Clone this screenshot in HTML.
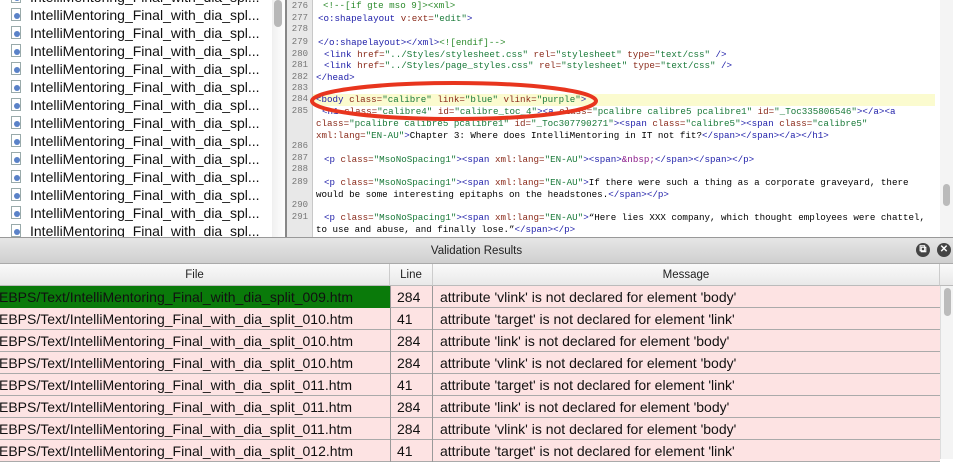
<!DOCTYPE html>
<html><head><meta charset="utf-8">
<style>
*{margin:0;padding:0;box-sizing:border-box}
body{width:953px;height:459px;overflow:hidden;background:#fff;font-family:"Liberation Sans",sans-serif;position:relative}
.left{position:absolute;left:0;top:0;width:272px;height:237px;background:#fff;overflow:hidden}
.li{position:absolute;left:0;height:18px;font-size:14px;color:#111;white-space:nowrap}
.li .ic{position:absolute;left:11px;top:2px;width:10px;height:13px;border:1px solid #9aa;background:#fff}
.li .ic:after{content:"";position:absolute;left:2px;top:4px;width:6px;height:6px;border-radius:50%;background:#5a82c8}
.li span{position:absolute;left:30px;top:0;line-height:18px}
.lsb{position:absolute;left:272px;top:0;width:13px;height:237px;background:linear-gradient(90deg,#f0f0f0,#fff)}
.lsb div{position:absolute;left:2px;top:0;width:8px;height:27px;border-radius:4px;background:#b8b8b8}
.div{position:absolute;left:285px;top:0;width:2px;height:237px;background:#888}
.gut{position:absolute;left:287px;top:0;width:26px;height:237px;background:#e8e8e8;border-right:1px solid #c8c8c8}
.code{position:absolute;left:313px;top:0;width:627px;height:237px;background:#fff;overflow:hidden}
.hl{position:absolute;left:0;top:94px;width:622px;height:12px;background:#fbfbcf}
.ln{position:absolute;left:288px;width:20px;text-align:right;font-family:"Liberation Mono",monospace;font-size:9px;color:#777}
.cl{position:absolute;left:317px;white-space:nowrap;font-family:"Liberation Mono",monospace;font-size:9.2px;line-height:12px}
.t{color:#1c1ca8}.a{color:#8a2a1a}.v{color:#1a7a3a}.c{color:#2b8a2b}.e{color:#8a1a8a}
.rsb{position:absolute;left:940px;top:0;width:13px;height:237px;background:#f4f4f4}
.rsb div{position:absolute;left:3px;top:184px;width:7px;height:22px;border-radius:4px;background:#bbb}
.vh{position:absolute;left:0;top:237px;width:953px;height:27px;background:linear-gradient(#e6e6e6,#cfcfcf);border-top:1px solid #999;border-bottom:1px solid #aaa;text-align:center;font-size:11.5px;line-height:27px;color:#222}
.btn{position:absolute;top:243px;width:14px;height:14px;border-radius:50%;background:#444;color:#fff;font-size:10px;line-height:14px;text-align:center;font-weight:bold}
.th{position:absolute;top:264px;height:22px;background:linear-gradient(#fafafa,#e9e9e9);border-bottom:1px solid #bbb;border-right:1px solid #ccc;font-size:11.5px;line-height:22px;text-align:center;color:#222}
.row{position:absolute;left:0;width:940px;height:22px;background:#fde3e3;border-bottom:1px solid #aaa;font-size:14px;line-height:22px;color:#111}
.row div{position:absolute;top:0;height:22px;white-space:nowrap}
.f{left:0;width:390px;text-indent:-1px}
.l{left:390px;width:43px;border-left:1px solid #999;border-right:1px solid #999;padding-left:6px}
.m{left:433px;width:507px;padding-left:7px}
.tsb{position:absolute;left:940px;top:286px;width:13px;height:173px;background:#f4f4f4;border-left:1px solid #ddd}
.tsb div{position:absolute;left:3px;top:2px;width:7px;height:28px;border-radius:4px;background:#bbb}
</style></head><body>
<div class="left">
<div class="li" style="top:-12px"><i class="ic"></i><span>IntelliMentoring_Final_with_dia_spl...</span></div>
<div class="li" style="top:6px"><i class="ic"></i><span>IntelliMentoring_Final_with_dia_spl...</span></div>
<div class="li" style="top:24px"><i class="ic"></i><span>IntelliMentoring_Final_with_dia_spl...</span></div>
<div class="li" style="top:42px"><i class="ic"></i><span>IntelliMentoring_Final_with_dia_spl...</span></div>
<div class="li" style="top:60px"><i class="ic"></i><span>IntelliMentoring_Final_with_dia_spl...</span></div>
<div class="li" style="top:78px"><i class="ic"></i><span>IntelliMentoring_Final_with_dia_spl...</span></div>
<div class="li" style="top:96px"><i class="ic"></i><span>IntelliMentoring_Final_with_dia_spl...</span></div>
<div class="li" style="top:114px"><i class="ic"></i><span>IntelliMentoring_Final_with_dia_spl...</span></div>
<div class="li" style="top:132px"><i class="ic"></i><span>IntelliMentoring_Final_with_dia_spl...</span></div>
<div class="li" style="top:150px"><i class="ic"></i><span>IntelliMentoring_Final_with_dia_spl...</span></div>
<div class="li" style="top:168px"><i class="ic"></i><span>IntelliMentoring_Final_with_dia_spl...</span></div>
<div class="li" style="top:186px"><i class="ic"></i><span>IntelliMentoring_Final_with_dia_spl...</span></div>
<div class="li" style="top:204px"><i class="ic"></i><span>IntelliMentoring_Final_with_dia_spl...</span></div>
<div class="li" style="top:222px"><i class="ic"></i><span>IntelliMentoring_Final_with_dia_spl...</span></div>
</div>
<div class="lsb"><div></div></div>
<div class="div"></div>
<div class="gut"></div>
<div class="code"><div class="hl"></div></div>
<div class="rsb"><div></div></div>

<div class="ln" style="top:1px">276</div>
<div class="ln" style="top:13px">277</div>
<div class="ln" style="top:24px">278</div>
<div class="ln" style="top:37px">279</div>
<div class="ln" style="top:49px">280</div>
<div class="ln" style="top:60px">281</div>
<div class="ln" style="top:72px">282</div>
<div class="ln" style="top:83px">283</div>
<div class="ln" style="top:94px">284</div>
<div class="ln" style="top:106px">285</div>
<div class="ln" style="top:141px">286</div>
<div class="ln" style="top:153px">287</div>
<div class="ln" style="top:164px">288</div>
<div class="ln" style="top:177px">289</div>
<div class="ln" style="top:200px">290</div>
<div class="ln" style="top:212px">291</div>

<div class="cl" style="top:0px;left:323px"><span class="c">&lt;!--[if gte mso 9]&gt;&lt;xml&gt;</span></div>
<div class="cl" style="top:13px;left:318px"><span class="t">&lt;o:shapelayout </span><span class="a">v:ext=</span><span class="v">"edit"</span><span class="t">&gt;</span></div>
<div class="cl" style="top:37px;left:318px"><span class="t">&lt;/o:shapelayout&gt;&lt;/xml&gt;</span><span class="c">&lt;![endif]--&gt;</span></div>
<div class="cl" style="top:49px;left:324px"><span class="t">&lt;link </span><span class="a">href=</span><span class="v">"../Styles/stylesheet.css"</span> <span class="a">rel=</span><span class="v">"stylesheet"</span> <span class="a">type=</span><span class="v">"text/css"</span><span class="t"> /&gt;</span></div>
<div class="cl" style="top:60px;left:324px"><span class="t">&lt;link </span><span class="a">href=</span><span class="v">"../Styles/page_styles.css"</span> <span class="a">rel=</span><span class="v">"stylesheet"</span> <span class="a">type=</span><span class="v">"text/css"</span><span class="t"> /&gt;</span></div>
<div class="cl" style="top:72px;left:316px"><span class="t">&lt;/head&gt;</span></div>
<div class="cl" style="top:94px;left:316px"><span class="t">&lt;body </span><span class="a">class=</span><span class="v">"calibre"</span> <span class="a">link=</span><span class="v">"blue"</span> <span class="a">vlink=</span><span class="v">"purple"</span><span class="t">&gt;</span></div>
<div class="cl" style="top:106px;left:322px"><span class="t">&lt;h1 </span><span class="a">class=</span><span class="v">"calibre4"</span> <span class="a">id=</span><span class="v">"calibre_toc_4"</span><span class="t">&gt;&lt;a </span><span class="a">class=</span><span class="v">"pcalibre calibre5 pcalibre1"</span> <span class="a">id=</span><span class="v">"_Toc335806546"</span><span class="t">&gt;&lt;/a&gt;&lt;a</span></div>
<div class="cl" style="top:118px;left:316px"><span class="a">class=</span><span class="v">"pcalibre calibre5 pcalibre1"</span> <span class="a">id=</span><span class="v">"_Toc307790271"</span><span class="t">&gt;&lt;span </span><span class="a">class=</span><span class="v">"calibre5"</span><span class="t">&gt;&lt;span </span><span class="a">class=</span><span class="v">"calibre5"</span></div>
<div class="cl" style="top:130px;left:316px"><span class="a">xml:lang=</span><span class="v">"EN-AU"</span><span class="t">&gt;</span>Chapter 3: Where does IntelliMentoring in IT not fit?<span class="t">&lt;/span&gt;&lt;/span&gt;&lt;/a&gt;&lt;/h1&gt;</span></div>
<div class="cl" style="top:154px;left:324px"><span class="t">&lt;p </span><span class="a">class=</span><span class="v">"MsoNoSpacing1"</span><span class="t">&gt;&lt;span </span><span class="a">xml:lang=</span><span class="v">"EN-AU"</span><span class="t">&gt;&lt;span&gt;</span><span class="e">&amp;nbsp;</span><span class="t">&lt;/span&gt;&lt;/span&gt;&lt;/p&gt;</span></div>
<div class="cl" style="top:177px;left:324px"><span class="t">&lt;p </span><span class="a">class=</span><span class="v">"MsoNoSpacing1"</span><span class="t">&gt;&lt;span </span><span class="a">xml:lang=</span><span class="v">"EN-AU"</span><span class="t">&gt;</span>If there were such a thing as a corporate graveyard, there</div>
<div class="cl" style="top:189px;left:316px">would be some interesting epitaphs on the headstones.<span class="t">&lt;/span&gt;&lt;/p&gt;</span></div>
<div class="cl" style="top:212px;left:324px"><span class="t">&lt;p </span><span class="a">class=</span><span class="v">"MsoNoSpacing1"</span><span class="t">&gt;&lt;span </span><span class="a">xml:lang=</span><span class="v">"EN-AU"</span><span class="t">&gt;</span>“Here lies XXX company, which thought employees were chattel,</div>
<div class="cl" style="top:224px;left:316px">to use and abuse, and finally lose.”<span class="t">&lt;/span&gt;&lt;/p&gt;</span></div>

<svg style="position:absolute;left:0;top:0" width="953" height="237"><ellipse cx="454" cy="101" rx="142" ry="18" fill="none" stroke="#e8351e" stroke-width="4"/></svg>

<div class="vh">Validation Results</div>
<div class="btn" style="left:916px">⧉</div>
<div class="btn" style="left:937px">✕</div>

<div class="th" style="left:0;width:390px">File</div>
<div class="th" style="left:390px;width:43px">Line</div>
<div class="th" style="left:433px;width:507px">Message</div>
<div class="th" style="left:940px;width:13px;border-right:0"></div>

<div class="row" style="top:286px"><div class="f" style="background:#0a7a0a;color:#111">EBPS/Text/IntelliMentoring_Final_with_dia_split_009.htm</div><div class="l">284</div><div class="m">attribute 'vlink' is not declared for element 'body'</div></div>
<div class="row" style="top:308px"><div class="f">EBPS/Text/IntelliMentoring_Final_with_dia_split_010.htm</div><div class="l">41</div><div class="m">attribute 'target' is not declared for element 'link'</div></div>
<div class="row" style="top:330px"><div class="f">EBPS/Text/IntelliMentoring_Final_with_dia_split_010.htm</div><div class="l">284</div><div class="m">attribute 'link' is not declared for element 'body'</div></div>
<div class="row" style="top:352px"><div class="f">EBPS/Text/IntelliMentoring_Final_with_dia_split_010.htm</div><div class="l">284</div><div class="m">attribute 'vlink' is not declared for element 'body'</div></div>
<div class="row" style="top:374px"><div class="f">EBPS/Text/IntelliMentoring_Final_with_dia_split_011.htm</div><div class="l">41</div><div class="m">attribute 'target' is not declared for element 'link'</div></div>
<div class="row" style="top:396px"><div class="f">EBPS/Text/IntelliMentoring_Final_with_dia_split_011.htm</div><div class="l">284</div><div class="m">attribute 'link' is not declared for element 'body'</div></div>
<div class="row" style="top:418px"><div class="f">EBPS/Text/IntelliMentoring_Final_with_dia_split_011.htm</div><div class="l">284</div><div class="m">attribute 'vlink' is not declared for element 'body'</div></div>
<div class="row" style="top:440px"><div class="f">EBPS/Text/IntelliMentoring_Final_with_dia_split_012.htm</div><div class="l">41</div><div class="m">attribute 'target' is not declared for element 'link'</div></div>
<div class="tsb"><div></div></div>
</body></html>
